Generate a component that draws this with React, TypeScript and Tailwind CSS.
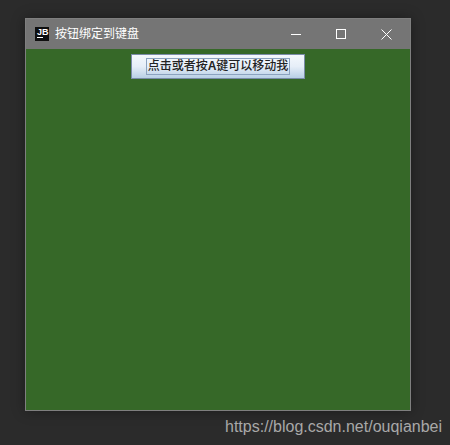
import React from "react";

export default function App() {
  return (
    <div className="flex h-[445px] w-[450px] flex-col overflow-hidden bg-[#2b2b2b] pl-[25px] pt-[18px] font-['Liberation_Sans','Noto_Sans_CJK_SC',sans-serif]">
      {/* Window */}
      <div className="flex h-[393px] w-[386px] flex-col border border-[#7f7f7f] shadow-[0_0_12px_rgba(0,0,0,0.35)]">
        {/* Title bar */}
        <div className="flex h-[30px] items-center bg-[#757575] pl-[9px]">
          <div className="flex h-[14px] w-[14px] flex-col items-start bg-[#0f0f0f] pl-[2px] pt-[1px]">
            <span className="text-[9px] font-bold leading-[8px] text-white">JB</span>
            <div className="mt-[1px] h-[1px] w-[6px] bg-white" />
          </div>
          <span className="ml-[6px] flex-1 text-[12px] text-white">按钮绑定到键盘</span>
          <div className="flex h-full w-[45px] items-center justify-center">
            <div className="h-[1px] w-[10px] bg-white" />
          </div>
          <div className="flex h-full w-[45px] items-center justify-center">
            <div className="h-[10px] w-[10px] border border-white" />
          </div>
          <div className="flex h-full w-[47px] items-center justify-center pr-[1px]">
            <svg width="11" height="11" viewBox="0 0 11 11" fill="none" stroke="#fff" strokeWidth="1">
              <path d="M0.5 0.5L10.5 10.5M10.5 0.5L0.5 10.5" />
            </svg>
          </div>
        </div>
        {/* Content */}
        <div className="flex flex-1 justify-center bg-[#366828] pt-[5px]">
          <button className="flex h-[25px] w-[174px] items-center justify-center border border-[#7a8ca8] bg-gradient-to-b from-[#f4f8fc] via-[#e6eef8] to-[#b8cfe5]">
            <span className="border border-[#8ba2bf] px-[1px] text-[12px] font-medium leading-[15px] text-[#222222]">
              点击或者按<b>A</b>键可以移动我
            </span>
          </button>
        </div>
      </div>
      <div className="mt-[7px] pl-[200px] text-[16px] leading-[17px] whitespace-nowrap text-[#a8a8a8]">
        https://blog.csdn.net/ouqianbei
      </div>
    </div>
  );
}
